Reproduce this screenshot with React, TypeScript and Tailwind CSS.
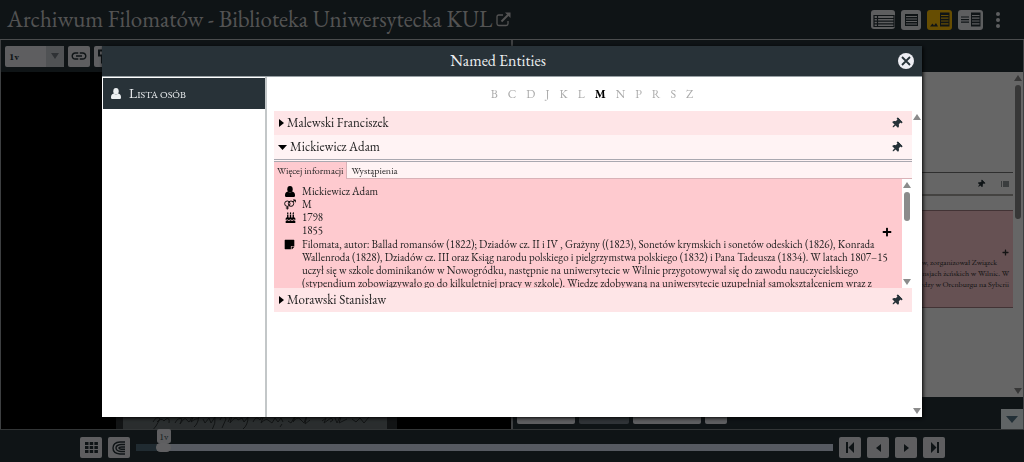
import type { ReactNode } from "react";
import { FaBirthdayCake, FaPlus, FaStickyNote, FaThumbtack } from "react-icons/fa";
import { MdLink } from "react-icons/md";

type Entity = {
  name: string;
  open?: boolean;
};

const LETTERS = ["B", "C", "D", "J", "K", "L", "M", "N", "P", "R", "S", "Z"];
const ACTIVE_LETTER = "M";

const ENTITIES: Entity[] = [
  { name: "Malewski Franciszek" },
  { name: "Mickiewicz Adam", open: true },
  { name: "Morawski Stanisław" },
];

const NOTE_LINES = [
  "Filomata, autor: Ballad romansów (1822); Dziadów cz. II i IV , Grażyny ((1823), Sonetów krymskich i sonetów odeskich (1826), Konrada",
  "Wallenroda (1828), Dziadów cz. III oraz Ksiąg narodu polskiego i pielgrzymstwa polskiego (1832) i Pana Tadeusza (1834). W latach 1807–15",
  "uczył się w szkole dominikanów w Nowogródku, następnie na uniwersytecie w Wilnie przygotowywał się do zawodu nauczycielskiego",
  "(stypendium zobowiązywało go do kilkuletniej pracy w szkole). Wiedzę zdobywaną na uniwersytecie uzupełniał samokształceniem wraz z",
];

function PersonIcon() {
  return (
    <svg width="10" height="11" viewBox="0 0 10 11" fill="currentColor" aria-hidden="true">
      <ellipse cx="5" cy="3.200" rx="2.700" ry="3.200" />
      <path d="M2.800 5.600Q0 6.400 0 9.200v.6Q0 11 1.200 11h7.600Q10 11 10 9.800v-.6Q10 6.400 7.200 5.600 5 7.400 2.800 5.600z" />
    </svg>
  );
}

function GenderIcon() {
  return (
    <svg width="13" height="11" viewBox="0 0 13 11" fill="none" stroke="currentColor" strokeWidth="1" aria-hidden="true">
      <circle cx="3.600" cy="4.600" r="2.900" />
      <circle cx="7.600" cy="4.600" r="2.900" />
      <path d="M3.600 7.500V11M2 9.300h3.200M9.700 2.600 12 .8M9.800.6h2.500v2.500" />
    </svg>
  );
}

const DETAILS: { icon?: ReactNode; text: string }[] = [
  { icon: <PersonIcon />, text: "Mickiewicz Adam" },
  { icon: <GenderIcon />, text: "M" },
  { icon: <FaBirthdayCake size={11} />, text: "1798" },
  { text: "1855" },
];

function Arrow({ up }: { up?: boolean }) {
  return (
    <svg width="8" height="6" viewBox="0 0 8 6" fill="currentColor" aria-hidden="true">
      <path d={up ? "M4 0 8 6H0z" : "M0 0h8L4 6z"} />
    </svg>
  );
}

function Scrollbar({ thumb }: { thumb?: string }) {
  return (
    <div className="flex w-[10px] shrink-0 flex-col items-center justify-between py-[3px] text-[#8b8b8b]">
      <div className="flex flex-col items-center gap-1">
        <Arrow up />
        {thumb && <div className={`w-[6px] rounded-full bg-[#8b8b8b] ${thumb}`} />}
      </div>
      <Arrow />
    </div>
  );
}

function IconButton({ label, children }: { label: string; children: ReactNode }) {
  return (
    <button
      type="button"
      aria-label={label}
      className="flex h-[21px] w-[22px] shrink-0 items-center justify-center rounded-[2px] bg-[#eaecf1] text-[#263238]"
    >
      {children}
    </button>
  );
}

function ExternalLinkIcon() {
  return (
    <svg width="15" height="15" viewBox="0 0 15 15" fill="none" stroke="currentColor" strokeWidth="1.3" aria-hidden="true">
      <path d="M7 3H2.800Q1 3 1 4.800v7Q1 13.500 2.800 13.500h7.400Q12 13.500 12 11.800V9" />
      <path d="M5.500 9.500 12.500 2.500" strokeWidth="2" />
      <path d="M9 0.500h5.500V6z" fill="currentColor" stroke="none" />
    </svg>
  );
}

function ViewModes() {
  return (
    <div className="flex items-center gap-[6px] text-[#263238]">
      <button type="button" aria-label="Lista" className="rounded-[3px] bg-[#e8eaee]">
        <svg width="24" height="19" viewBox="0 0 24 19" fill="none" stroke="currentColor" strokeWidth="1.200">
          <path d="M3 5.500h20v11H3zM6.500 5.500v11M3 8.500h20M3 11.200h20M3 13.900h20" />
        </svg>
      </button>
      <button type="button" aria-label="Tekst" className="rounded-[3px] bg-[#e8eaee]">
        <svg width="20" height="20" viewBox="0 0 20 20" fill="none">
          <path d="M4 4h13v12H4z" fill="currentColor" />
          <path d="M5 6.500h11M5 9h11M5 11.500h11M5 14h11" stroke="#e8eaee" strokeWidth="1.200" />
        </svg>
      </button>
      <button type="button" aria-label="Obraz i tekst" className="rounded-[3px] bg-[#ffc107]">
        <svg width="25" height="20" viewBox="0 0 25 20" fill="none">
          <path d="M13 2.500h9.500v14H13zM3 16.500l2.500-3 1.500 2 2-2.500 2 3.500z" fill="currentColor" />
          <path d="M14 5.500h7.500M14 8.200h7.500M14 11h7.500M14 13.800h7.500" stroke="#ffc107" strokeWidth="1.200" />
        </svg>
      </button>
      <button type="button" aria-label="Tekst i tekst" className="rounded-[3px] bg-[#e8eaee]">
        <svg width="25" height="20" viewBox="0 0 25 20" fill="none">
          <path d="M13 2.500h9.500v14H13z" fill="currentColor" />
          <path d="M14 5.500h7.500M14 8.200h7.500M14 11h7.500M14 13.800h7.500" stroke="#e8eaee" strokeWidth="1.200" />
          <path d="M3 7h8M3 9.600h8M3 12.200h8" stroke="currentColor" strokeWidth="1.200" />
        </svg>
      </button>
      <button type="button" aria-label="Menu" className="ml-[5px] text-[#e8eaee]">
        <svg width="8" height="18" viewBox="0 0 8 18" fill="currentColor">
          <circle cx="4" cy="3" r="2" />
          <circle cx="4" cy="9" r="2" />
          <circle cx="4" cy="15" r="2" />
        </svg>
      </button>
    </div>
  );
}

function ImagePane() {
  return (
    <section className="flex min-w-0 flex-1 flex-col border-l border-[#9a9fa3] bg-black">
      <div className="flex h-[32px] shrink-0 items-center gap-1 bg-[#263238] px-1">
        <div className="relative flex h-[21px] w-[59px] rounded-[2px] bg-[#eaecf1]">
          <select aria-label="Strona" className="w-full appearance-none pl-1 text-[10px] font-bold text-[#263238]">
            <option>1v</option>
          </select>
          <span className="pointer-events-none absolute inset-y-0 right-0 flex w-[18px] items-center justify-center bg-[#c9cdd2] text-[#777d84]">
            <Arrow />
          </span>
        </div>
        <IconButton label="Połącz">
          <MdLink size={18} />
        </IconButton>
        <IconButton label="Miniatury">
          <svg width="14" height="15" viewBox="0 0 14 15" fill="none" stroke="currentColor" strokeWidth="2">
            <path d="M1 1.500h5v5H1zM4 6.500v7h5v-5H4M9 1.500h4v4" />
          </svg>
        </IconButton>
        <div className="h-[21px] w-[52px] rounded-[2px] bg-[#65707a]" />
      </div>
      <div className="flex flex-1 pr-[114px] pl-[115px]">
        <div className="flex w-full items-end overflow-hidden border-r-[10px] border-l-[7px] border-[#2f3336] bg-[#697274]">
          <svg className="shrink-0" width="264" height="16" viewBox="0 0 264 16" fill="none" stroke="#2c3132" strokeWidth="1">
            <path d="M30 9q4-7 7-3-4 8-8 12M34 9q4-5 7-1l2-2q4-2 3 4M52 10q3-6 7-4l-2 5q5-8 7-4t4-1q1-8 5-9l-5 12q5-4 7-3l1-3q-1 8-5 11M80 6l2 4 4-5 2 5 4-6q1 6-3 13M97 7q3-7 6-1l-4 9M105 9l5-10-3 11q6-8 8-3l4-2 2 4 4-5q0 8-5 12M130 9q3-7 7-2l6-11-5 14q5-5 7-3l4 3 3-5 3 4 3-4 2 4M159 11l-2 3M165 8l3 2 7-12-5 11q4-6 7-3l4 4 3-8-2 9 5-4M199 8l4-3-2 5 7-5q4 2-1 4M212 5l2 5 6-12-4 12 8-4M229 6l4 3 4-4 4 5 5-6" />
          </svg>
        </div>
      </div>
    </section>
  );
}

function TextPane() {
  return (
    <section className="flex min-w-0 flex-1 flex-col border-x border-l-2 border-[#9a9fa3] bg-[#263238]">
      <div className="flex h-[32px] shrink-0 items-center gap-1 px-1">
        <div className="h-[21px] w-[59px] rounded-[2px] bg-[#a0a4a8]" />
        <div className="h-[21px] w-[58px] rounded-[2px] bg-[#a0a4a8]" />
        <div className="h-[21px] w-[84px] rounded-[2px] bg-[#a0a4a8]" />
        <div className="h-[21px] w-[68px] rounded-[2px] bg-[#a0a4a8]" />
      </div>
      <div className="flex min-h-0 flex-1 bg-white">
        <div className="flex min-w-0 flex-1 flex-col pt-[100px] pl-[100px]">
          <div className="flex h-[24px] shrink-0 items-center justify-end gap-4 border-t border-b-2 border-t-[#777] border-b-[#aaa9a4] pr-1 text-[#263238]">
            <FaThumbtack size={8} className="rotate-45" />
            <svg width="8" height="6" viewBox="0 0 8 6" stroke="currentColor">
              <path d="M0 1h1M2 1h6M0 3h1M2 3h6M0 5h1M2 5h6" />
            </svg>
          </div>
          <div className="mt-[14px] flex h-[98px] shrink-0 flex-col items-end border-y border-[#a58085] bg-[#fecacf] pt-[38px] pr-1 text-[8px] leading-[11px] whitespace-nowrap text-[#333]">
            <FaPlus size={7} className="mb-px" />
            <p className="pr-3">Filomatów, zorganizował Związek</p>
            <p>pensjach żeńskich w Wilnie. W</p>
            <p>twierdzy w Orenburgu na Syberii</p>
          </div>
        </div>
        <Scrollbar thumb="h-[134px]" />
      </div>
      <div className="flex h-[32px] shrink-0 items-start gap-1 pl-1">
        <div className="mt-[6px] h-[21px] w-[58px] rounded-[2px] bg-[#eaecf1]" />
        <div className="mt-[6px] h-[21px] w-[50px] rounded-[2px] bg-[#77818a]" />
        <div className="mt-[6px] h-[21px] w-[68px] rounded-[2px] bg-[#eaecf1]" />
        <div className="mt-[6px] h-[21px] w-[22px] rounded-[2px] bg-[#eaecf1]" />
        <button
          type="button"
          aria-label="Zwiń"
          className="ml-auto flex h-[20px] w-[22px] items-center justify-center self-end bg-[#f0fbfd] text-[#58788a]"
        >
          <svg width="12" height="7" viewBox="0 0 12 7" fill="currentColor">
            <path d="M0 0h12L6 7z" />
          </svg>
        </button>
      </div>
    </section>
  );
}

function PageNavigator() {
  return (
    <footer className="flex h-[33px] shrink-0 items-center gap-[6px] border-t border-[#7d8488] bg-[#263238] pt-[4px] pr-[79px] pb-px pl-[80px]">
      <IconButton label="Siatka">
        <svg width="13" height="11" viewBox="0 0 13 11" fill="currentColor">
          <path d="M0 0h3.500v3H0zM4.700 0h3.500v3H4.700zM9.400 0h3.500v3H9.400zM0 4h3.500v3H0zM4.700 4h3.500v3H4.700zM9.400 4h3.500v3H9.400zM0 8h3.500v3H0zM4.700 8h3.500v3H4.700zM9.400 8h3.500v3H9.400z" />
        </svg>
      </IconButton>
      <IconButton label="Składki">
        <svg width="14" height="14" viewBox="0 0 14 14" fill="none" stroke="currentColor" strokeWidth="1.400">
          <path d="M13 1H8Q1 1.500 1 7t7 6h5M13 3.500H9Q4 4 4 7t5 3.500h4M13 6H9.500Q7 6 7 7t2.500 1.200H13" />
        </svg>
      </IconButton>
      <div className="relative flex flex-1 items-center">
        <input
          type="range"
          aria-label="Strona rękopisu"
          min={0}
          max={100}
          defaultValue={3}
          className="h-[7px] w-full appearance-none bg-linear-to-r from-[#526c7a] from-3% to-[#d7e0f2] to-3% [&::-webkit-slider-thumb]:h-[9px] [&::-webkit-slider-thumb]:w-[15px] [&::-webkit-slider-thumb]:appearance-none [&::-webkit-slider-thumb]:rounded-full [&::-webkit-slider-thumb]:bg-[#f0f0f4]"
        />
        <output className="absolute bottom-[8px] left-[3%] flex h-[14px] w-[14px] items-center justify-center rounded-[2px] bg-[#eaecf1] text-[10px] text-[#455]">
          1v
        </output>
      </div>
      <IconButton label="Pierwsza">
        <svg width="9" height="11" viewBox="0 0 9 11" fill="currentColor">
          <path d="M0 0h2v11H0zM8 0v11L2.500 5.500z" />
        </svg>
      </IconButton>
      <IconButton label="Poprzednia">
        <svg width="5" height="8" viewBox="0 0 5 8" fill="currentColor">
          <path d="M5 0v8L0 4z" />
        </svg>
      </IconButton>
      <IconButton label="Następna">
        <svg width="5" height="8" viewBox="0 0 5 8" fill="currentColor">
          <path d="M0 0v8l5-4z" />
        </svg>
      </IconButton>
      <IconButton label="Ostatnia">
        <svg width="9" height="11" viewBox="0 0 9 11" fill="currentColor">
          <path d="M7 0h2v11H7zM1 0v11l5.500-5.500z" />
        </svg>
      </IconButton>
    </footer>
  );
}

function EntityDetails() {
  return (
    <div>
      <div className="flex h-[20px] items-stretch border-t-[3px] border-double border-[#a9a8b0] bg-[#fff3f4] text-[10px]">
        <button type="button" className="border-r border-[#d9b2b7] bg-[#fecacf] px-[3px]">
          Więcej informacji
        </button>
        <button type="button" className="flex-1 border-b border-[#d9b2b7] px-[4px] text-left">
          Wystąpienia
        </button>
      </div>
      <div className="flex h-[109px]">
        <div className="flex min-w-0 flex-1 overflow-hidden bg-[#fecacf] pt-[6px] pl-[10px] text-[11px] leading-[13px]">
          <div className="min-w-0 flex-1">
            {DETAILS.map((detail) => (
              <div key={detail.text} className="flex items-center">
                <span className="flex w-[12px] shrink-0 justify-center text-black">{detail.icon}</span>
                <span className="pl-[6px]">{detail.text}</span>
              </div>
            ))}
            <div className="mt-px flex">
              <span className="w-[12px] shrink-0 pt-px text-black">
                <FaStickyNote size={11} />
              </span>
              <p className="pl-[6px] whitespace-nowrap">
                {NOTE_LINES.map((line) => (
                  <span key={line} className="block">
                    {line}
                  </span>
                ))}
              </p>
            </div>
          </div>
          <button type="button" aria-label="Rozwiń" className="flex w-[20px] shrink-0 justify-center self-start pt-[42px] pr-[10px] text-black">
            <FaPlus size={10} className="shrink-0" />
          </button>
        </div>
        <Scrollbar thumb="h-[29px]" />
      </div>
    </div>
  );
}

function NamedEntitiesDialog() {
  return (
    <div className="fixed inset-0 flex bg-black/60 px-[102px] pt-[46px] pb-[45px]">
      <div role="dialog" aria-label="Named Entities" className="flex min-w-0 flex-1 flex-col bg-white text-[#222] shadow-[1px_1px_4px_#000]">
        <header className="flex h-[31px] shrink-0 items-center border-b border-[#98a0a4] bg-[#283238] pr-2 text-[#eceff1]">
          <h2 className="flex-1 pr-1 text-center text-[16px]">Named Entities</h2>
          <button type="button" aria-label="Zamknij" className="flex size-[16px] items-center justify-center rounded-full bg-[#eeeef4] text-[#263238]">
            <svg width="10" height="10" viewBox="0 0 10 10" stroke="currentColor" strokeWidth="1.800">
              <path d="M1 1l8 8M9 1L1 9" />
            </svg>
          </button>
        </header>
        <div className="flex min-h-0 flex-1">
          <nav className="w-[165px] shrink-0 border-r-2 border-[#c3c7c8] pt-px pl-px">
            <button type="button" className="flex h-[31px] w-full items-center gap-2 bg-[#283238] pl-2 text-[#eceff1]">
              <PersonIcon />
              <span className="inline-block text-[10px] uppercase first-letter:text-[14px]">Lista osób</span>
            </button>
          </nav>
          <div className="flex min-w-0 flex-1 flex-col pl-[7px]">
            <ul className="flex h-[34px] shrink-0 items-center justify-center gap-[10px] pr-3 text-[12px] text-[#aaa]">
              {LETTERS.map((letter) => (
                <li key={letter}>
                  <button type="button" className={letter === ACTIVE_LETTER ? "font-bold text-black" : ""}>
                    {letter}
                  </button>
                </li>
              ))}
            </ul>
            <div className="flex min-h-0 flex-1">
              <div className="min-w-0 flex-1">
                {ENTITIES.map((entity) => (
                  <div key={entity.name}>
                    <div className={`flex h-[24px] items-center justify-between pr-[10px] pl-1 ${entity.open ? "bg-[#fff3f4]" : "bg-[#fee5e7]"}`}>
                      <button type="button" className="flex items-center gap-[3px] text-[13px] leading-[16px]">
                        {entity.open ? (
                          <svg width="9" height="5" viewBox="0 0 9 5">
                            <path d="M0 0h9L4.500 5z" />
                          </svg>
                        ) : (
                          <svg width="6" height="8" viewBox="0 0 6 8">
                            <path d="M1 0v8l5-4z" />
                          </svg>
                        )}
                        {entity.name}
                      </button>
                      <button type="button" aria-label={`Przypnij ${entity.name}`} className="text-[#263238]">
                        <FaThumbtack size={11} className="rotate-45" />
                      </button>
                    </div>
                    {entity.open && <EntityDetails />}
                  </div>
                ))}
              </div>
              <Scrollbar />
            </div>
          </div>
        </div>
      </div>
    </div>
  );
}

export default function App() {
  return (
    <div className="flex h-screen flex-col overflow-hidden bg-[#263238] font-['EB_Garamond','Liberation_Serif',serif]">
      <header className="flex h-[40px] shrink-0 items-center border-b border-[#b9bdc0] pr-[22px] pl-[7px] text-[#cfcfcf]">
        <h1 className="text-[23px] whitespace-nowrap">Archiwum Filomatów - Biblioteka Uniwersytecka KUL</h1>
        <a href="#" aria-label="Otwórz" className="ml-1 flex-1">
          <ExternalLinkIcon />
        </a>
        <ViewModes />
      </header>
      <main className="flex min-h-0 flex-1">
        <ImagePane />
        <TextPane />
      </main>
      <PageNavigator />
      <NamedEntitiesDialog />
    </div>
  );
}
